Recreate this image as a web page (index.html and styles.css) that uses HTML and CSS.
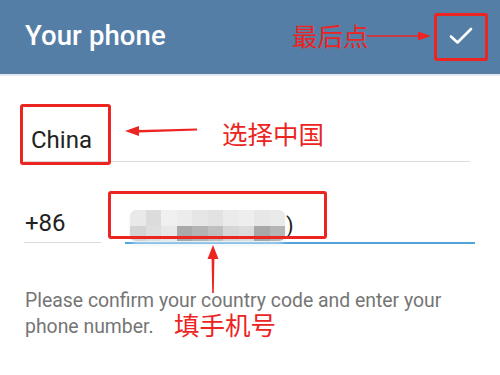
FILE: index.html
```html
<!DOCTYPE html>
<html>
<head>
<meta charset="utf-8">
<link rel="stylesheet" href="styles.css">
</head>
<body>
<div class="page">
  <header class="header">
    <h1 class="title">Your phone</h1>
    <button class="done" aria-label="Done">
      <svg width="26" height="20" viewBox="0 0 26 20"><path d="M3 10.5 L9.5 16.5 L23 3" fill="none" stroke="#fff" stroke-width="2.6" stroke-linecap="round" stroke-linejoin="round"/></svg>
    </button>
  </header>
  <main class="form">
    <div class="country">China</div>
    <div class="phone-row">
      <div class="code">+86</div>
      <div class="number">
        <div class="blur">
          <div class="px" style="background:#e9e9e9"></div><div class="px" style="background:#dcdcdc"></div><div class="px" style="background:#f0f0f0"></div><div class="px" style="background:#ececec"></div><div class="px" style="background:#e6e6e6"></div><div class="px" style="background:#e2e2e2"></div><div class="px" style="background:#ebebeb"></div><div class="px" style="background:#eeeeee"></div><div class="px" style="background:#e7e7e7"></div><div class="px" style="background:#eaeaea"></div>
          <div class="px" style="background:#d4d4d4"></div><div class="px" style="background:#dedede"></div><div class="px" style="background:#e8e8e8"></div><div class="px" style="background:#a9a9a9"></div><div class="px" style="background:#b3b3b3"></div><div class="px" style="background:#bfbfbf"></div><div class="px" style="background:#d6d6d6"></div><div class="px" style="background:#dcdcdc"></div><div class="px" style="background:#a8a8a8"></div><div class="px" style="background:#b5b5b5"></div>
        </div>
        <span class="paren">)</span>
      </div>
    </div>
    <p class="hint">Please confirm your country code and enter your phone number.</p>
  </main>

  <div class="notes">
    <div class="box box-done"></div>
    <div class="box box-country"></div>
    <div class="box box-phone"></div>
    <span class="label label-done">最后点</span>
    <span class="label label-country">选择中国</span>
    <span class="label label-phone">填手机号</span>
    <svg class="arrows" width="500" height="375" viewBox="0 0 500 375">
      <path d="M367 35.2 L418 35.2 L418 31.5 L431 36 L418 40.5 L418 36.8 L367 36.8 Z" fill="#ec2422"/>
      <path d="M197 128.6 L139 130 L139 126 L125 131 L139 136 L139 132.4 L197 130.4 Z" fill="#ec2422"/>
      <path d="M212.2 293 L211.6 259 L207.5 259 L213 245 L218.5 259 L214.4 259 L213.8 293 Z" fill="#ec2422"/>
    </svg>
  </div>
</div>
</body>
</html>
```
FILE: styles.css
```css
* { box-sizing: border-box; }
html, body { margin: 0; padding: 0; }
body {
  width: 500px;
  height: 375px;
  overflow: hidden;
  background: #fff;
  font-family: Roboto, "Noto Sans", sans-serif;
}
.page {
  position: relative;
  width: 500px;
  height: 375px;
}
.header {
  height: 76px;
  background: #547ea5;
  border-bottom: 2px solid #dfe8f1;
  display: flex;
  align-items: center;
  justify-content: space-between;
  padding: 0 15px 3px 25px;
}
.title {
  margin: 0;
  font-size: 27.5px;
  font-weight: 500;
  color: #fff;
  letter-spacing: 0.1px;
}
.done {
  width: 48px;
  height: 48px;
  border: 0;
  background: transparent;
  display: flex;
  align-items: center;
  justify-content: center;
  padding: 0;
}
.form {
  padding: 0 25px 0 24px;
}
.country {
  margin-top: 50px;
  margin-right: 5px;
  padding: 0 0 7px 7px;
  font-size: 24px;
  line-height: 28px;
  color: #222;
  border-bottom: 1px solid #dadada;
}
.phone-row {
  margin-top: 43px;
  display: flex;
  align-items: flex-end;
  gap: 24px;
}
.code {
  width: 77px;
  padding: 0 0 5px 1px;
  font-size: 24px;
  line-height: 28px;
  color: #222;
  border-bottom: 1px solid #dadada;
  margin-bottom: 1px;
}
.number {
  flex: 1;
  height: 39px;
  display: flex;
  align-items: center;
  padding-left: 5px;
  border-bottom: 2px solid #4fa3d9;
}
.blur {
  display: grid;
  grid-template-columns: repeat(10, 15.5px);
  grid-template-rows: 16px 15px;
  border-radius: 6px;
  overflow: hidden;
  margin-top: 4px;
  box-shadow: 0 4px 6px -2px #d6e8f4;
}
.paren {
  font-size: 22px;
  color: #222;
  margin-left: 1px;
  margin-top: 4px;
}
.hint {
  margin: 44px 0 0 1px;
  font-size: 19.4px;
  line-height: 26px;
  color: #757575;
  width: 452px;
}

/* annotation layer */
.notes {
  position: absolute;
  inset: 0;
  pointer-events: none;
}
.box {
  position: absolute;
  border: 3.5px solid #ec2422;
  border-radius: 3px;
}
.box-done { left: 434px; top: 13px; width: 54px; height: 48px; }
.box-country { left: 20px; top: 104px; width: 91px; height: 61px; }
.box-phone { left: 108px; top: 191px; width: 219px; height: 48px; }
.label {
  position: absolute;
  font-family: "Noto Sans CJK SC", sans-serif;
  font-size: 25.5px;
  line-height: 26px;
  color: #ec2422;
}
.label-done { left: 292px; top: 22px; }
.label-country { left: 222px; top: 120px; }
.label-phone { left: 174px; top: 311px; }
.arrows {
  position: absolute;
  left: 0;
  top: 0;
}
```
